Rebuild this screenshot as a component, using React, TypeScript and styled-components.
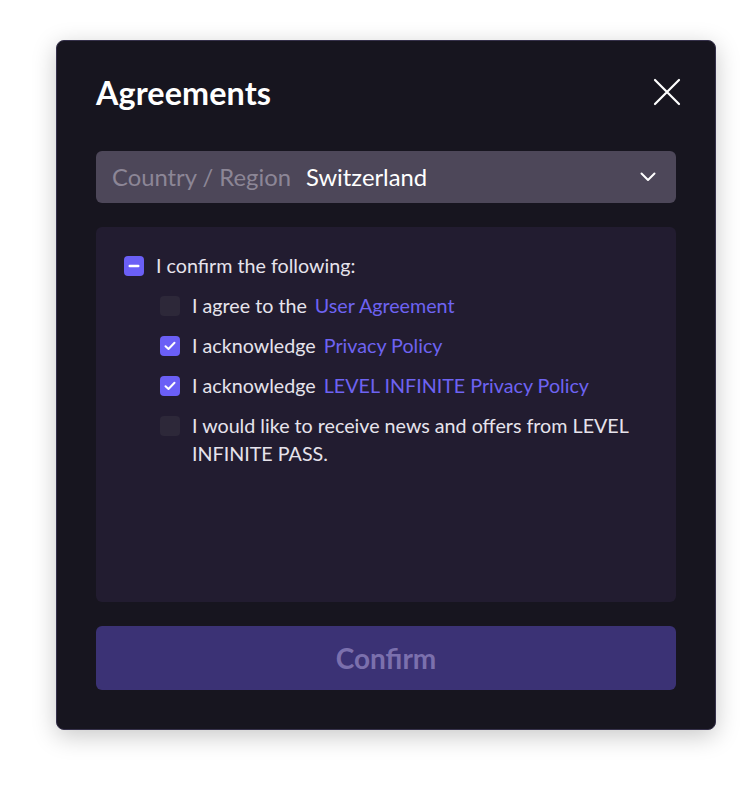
import React from 'react';
import styled, { createGlobalStyle } from 'styled-components';

const GlobalStyle = createGlobalStyle`
  html, body {
    margin: 0;
    padding: 0;
    background: #ffffff;
    font-family: Lato, 'Noto Sans', sans-serif;
  }
`;

const Page = styled.div`
  width: 756px;
  height: 786px;
  padding: 40px 0 0 56px;
  box-sizing: border-box;
`;

const Modal = styled.div`
  width: 660px;
  height: 690px;
  box-sizing: border-box;
  background: #17151f;
  border: 1px solid #35304a;
  border-radius: 8px;
  box-shadow: 0 6px 24px rgba(0, 0, 0, 0.22);
  padding: 30px 39px 39px;
  display: flex;
  flex-direction: column;
`;

const Header = styled.div`
  display: flex;
  justify-content: space-between;
  align-items: center;
  height: 42px;
  margin-bottom: 38px;
`;

const Title = styled.h1`
  margin: 0;
  color: #ffffff;
  font-size: 32.3px;
  font-weight: 700;
  letter-spacing: 0.1px;
`;

const CloseButton = styled.button`
  background: none;
  border: none;
  padding: 0;
  width: 30px;
  height: 30px;
  margin-right: -6px;
  display: flex;
  align-items: center;
  justify-content: center;
  cursor: pointer;
`;

const Select = styled.div`
  height: 52px;
  border-radius: 6px;
  background: #4d4759;
  display: flex;
  align-items: center;
  padding: 0 20px 0 16px;
  font-size: 23.8px;
`;

const SelectLabel = styled.span`
  color: #8c8696;
  margin-right: 15px;
`;

const SelectValue = styled.span`
  color: #ffffff;
  flex: 1;
`;

const Panel = styled.div`
  margin-top: 24px;
  height: 375px;
  box-sizing: border-box;
  border-radius: 6px;
  background: #221c30;
  padding: 25px 28px;
  display: flex;
  flex-direction: column;
  gap: 12px;
`;

const Row = styled.label<{ $indent?: boolean }>`
  display: flex;
  align-items: flex-start;
  gap: 12px;
  margin-left: ${(p) => (p.$indent ? '36px' : '0')};
  color: #e6e3ec;
  font-size: 19.7px;
  line-height: 28px;
`;

const Box = styled.span<{ $on?: boolean }>`
  flex: none;
  width: 20px;
  height: 20px;
  margin-top: 4px;
  border-radius: 4px;
  background: ${(p) => (p.$on ? '#6b5ff6' : '#2d2839')};
  display: flex;
  align-items: center;
  justify-content: center;
`;

const Link = styled.a`
  color: #6e63f2;
  text-decoration: none;
  margin-left: 8px;
`;

const ConfirmButton = styled.button`
  margin-top: 24px;
  height: 64px;
  border: none;
  border-radius: 6px;
  background: #3b3275;
  color: #7b70ad;
  font-family: Lato, 'Noto Sans', sans-serif;
  font-size: 28px;
  font-weight: 700;
  cursor: not-allowed;
`;

const Check = () => (
  <svg width="12" height="10" viewBox="0 0 12 10" fill="none">
    <path d="M1.5 5.2 4.5 8 10.5 1.8" stroke="#fff" strokeWidth="2" strokeLinecap="round" strokeLinejoin="round" />
  </svg>
);

const Dash = () => (
  <svg width="12" height="4" viewBox="0 0 12 4">
    <rect x="0.5" y="0.8" width="11" height="2.4" rx="1.2" fill="#fff" />
  </svg>
);

const items = [
  { on: false, text: 'I agree to the', link: 'User Agreement' },
  { on: true, text: 'I acknowledge', link: 'Privacy Policy' },
  { on: true, text: 'I acknowledge', link: 'LEVEL INFINITE Privacy Policy' },
  { on: false, text: 'I would like to receive news and offers from LEVEL INFINITE PASS.' },
];

const App = () => (
  <>
    <GlobalStyle />
    <Page>
      <Modal>
        <Header>
          <Title>Agreements</Title>
          <CloseButton aria-label="Close">
            <svg width="28" height="28" viewBox="0 0 28 28">
              <path d="M2 2 26 26M26 2 2 26" stroke="#fff" strokeWidth="2.2" strokeLinecap="round" />
            </svg>
          </CloseButton>
        </Header>
        <Select>
          <SelectLabel>Country / Region</SelectLabel>
          <SelectValue>Switzerland</SelectValue>
          <svg width="16" height="10" viewBox="0 0 16 10">
            <path d="M1.5 1.5 8 8l6.5-6.5" stroke="#fff" strokeWidth="2" fill="none" strokeLinecap="round" strokeLinejoin="round" />
          </svg>
        </Select>
        <Panel>
          <Row>
            <Box $on>
              <Dash />
            </Box>
            <span>I confirm the following:</span>
          </Row>
          {items.map((it, i) => (
            <Row $indent key={i}>
              <Box $on={it.on}>{it.on && <Check />}</Box>
              <span>
                {it.text}
                {it.link && <Link href="#">{it.link}</Link>}
              </span>
            </Row>
          ))}
        </Panel>
        <ConfirmButton disabled>Confirm</ConfirmButton>
      </Modal>
    </Page>
  </>
);

export default App;
